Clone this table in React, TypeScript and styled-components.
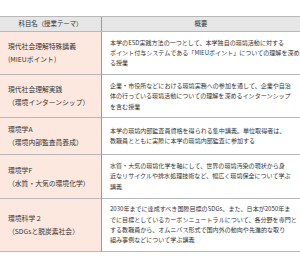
import React from "react";
import styled, { createGlobalStyle } from "styled-components";

const Global = createGlobalStyle`
  html, body { margin: 0; padding: 0; background: #fff; }
  body { font-family: "Noto Sans CJK JP", "Noto Sans", sans-serif; color: #333; }
`;

const Page = styled.div`
  padding-top: 16px;
  width: 300px;
`;

const Table = styled.table`
  width: 300px;
  border-collapse: collapse;
  table-layout: fixed;
`;

const HeadCell = styled.th<{ $w?: number }>`
  width: ${(p) => (p.$w ? `${p.$w}px` : "auto")};
  background: #e6e6e6;
  border-top: 1px solid #b8b8b8;
  border-bottom: 1px solid #b8b8b8;
  border-left: 1px solid #9a9a9a;
  font-weight: 400;
  font-size: 6.4px;
  line-height: 14px;
  height: 14px;
  padding: 0;
  text-align: center;
  &:first-child { border-left: none; }
`;

const Row = styled.tr`
  border-bottom: 1px solid #b8b8b8;
`;

const NameCell = styled.td`
  background: #fce8df;
  font-size: 6.8px;
  line-height: 13px;
  padding: 5px 0 5px 8px;
  vertical-align: middle;
  white-space: nowrap;
`;

const DescCell = styled.td`
  border-left: 1px solid #9a9a9a;
  font-size: 6.05px;
  line-height: 10.4px;
  padding: 5.5px 0 5.5px 8px;
  vertical-align: middle;
  white-space: nowrap;
  overflow: hidden;
`;

type Course = { name: string[]; desc: string[] };

const courses: Course[] = [
  {
    name: ["現代社会理解特殊講義", "(MIEUポイント)"],
    desc: [
      "本学のESD実践方法の一つとして、本学独自の環境活動に対する",
      "ポイント付与システムである「MIEUポイント」についての理解を深め",
      "る授業",
    ],
  },
  {
    name: ["現代社会理解実践", "（環境インターンシップ）"],
    desc: [
      "企業・市役所などにおける環境実務への参加を通して、企業や自治",
      "体の行っている環境活動についての理解を深めるインターンシップ",
      "を含む授業",
    ],
  },
  {
    name: ["環境学A", "（環境内部監査員養成）"],
    desc: [
      "本学の環境内部監査員資格を得られる集中講義。単位取得者は、",
      "教職員とともに実際に本学の環境内部監査に参加する",
    ],
  },
  {
    name: ["環境学F", "（水質・大気の環境化学）"],
    desc: [
      "水質・大気の環境化学を軸にして、世界の環境汚染の現状から身",
      "近なリサイクルや排水処理技術など、幅広く環境保全について学ぶ",
      "講義",
    ],
  },
  {
    name: ["環境科学２", "（SDGsと脱炭素社会）"],
    desc: [
      "2030年までに達成すべき国際目標のSDGs、また、日本が2050年ま",
      "でに目標としているカーボンニュートラルについて、各分野を専門と",
      "する教職員から、オムニバス形式で国内外の動向や先進的な取り",
      "組み事例などについて学ぶ講義",
    ],
  },
];

const Lines = ({ lines }: { lines: string[] }) => (
  <>
    {lines.map((l, i) => (
      <React.Fragment key={i}>
        {i > 0 && <br />}
        {l}
      </React.Fragment>
    ))}
  </>
);

export default function App() {
  return (
    <Page>
      <Global />
      <Table>
        <thead>
          <tr>
            <HeadCell $w={101}>科目名（授業テーマ）</HeadCell>
            <HeadCell>概要</HeadCell>
          </tr>
        </thead>
        <tbody>
          {courses.map((c, i) => (
            <Row key={i}>
              <NameCell>
                <Lines lines={c.name} />
              </NameCell>
              <DescCell>
                <Lines lines={c.desc} />
              </DescCell>
            </Row>
          ))}
        </tbody>
      </Table>
    </Page>
  );
}
